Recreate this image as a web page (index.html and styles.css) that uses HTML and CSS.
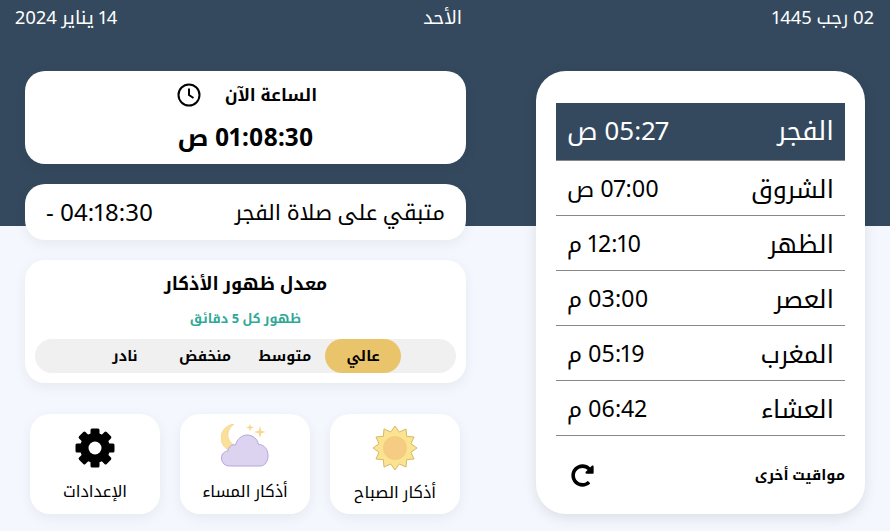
FILE: index.html
```html
<!DOCTYPE html>
<html lang="ar" dir="rtl">
  <head>
    <meta charset="UTF-8" />
    <meta name="viewport" content="width=device-width, initial-scale=1.0" />
    <title>مواقيت الصلاة</title>
    <link rel="stylesheet" href="styles.css">
  </head>
  <body>
    <main class="page">
      <!-- Prayer times column -->
      <section class="side">
        <div class="hijri">02 رجب 1445</div>
        <div class="prayers">
          <div class="prayer active"><span class="name">الفجر</span><span class="time">05:27 ص</span></div>
          <div class="prayer"><span class="name">الشروق</span><span class="time">07:00 ص</span></div>
          <div class="prayer"><span class="name">الظهر</span><span class="time">12:10 م</span></div>
          <div class="prayer"><span class="name">العصر</span><span class="time">03:00 م</span></div>
          <div class="prayer"><span class="name">المغرب</span><span class="time">05:19 م</span></div>
          <div class="prayer"><span class="name">العشاء</span><span class="time">06:42 م</span></div>
          <div class="more">
            <span>مواقيت أخرى</span>
            <svg class="refresh" viewBox="0 0 512 512"><path d="M256.455 8c66.269.119 126.437 26.233 170.859 68.685l35.715-35.715C478.149 25.851 504 36.559 504 57.941V192c0 13.255-10.745 24-24 24H345.941c-21.382 0-32.09-25.851-16.971-40.971l41.75-41.75c-30.864-28.899-70.801-44.907-113.23-45.273-92.398-.798-170.283 73.977-169.484 169.442C88.764 348.009 162.184 424 256 424c41.127 0 79.997-14.678 110.629-41.556 4.743-4.161 11.906-3.908 16.368.553l39.662 39.662c4.872 4.872 4.631 12.815-.482 17.433C378.202 479.813 319.926 504 256 504 119.034 504 8.001 392.967 8 256.002 7.999 119.193 119.646 7.755 256.455 8z"/></svg>
          </div>
        </div>
      </section>

      <!-- Clock and settings column -->
      <section class="content">
        <div class="dates">
          <span>الأحد</span>
          <span>14 يناير 2024</span>
        </div>

        <div class="card clock">
          <div class="clock-title">
            <span>الساعة الآن</span>
            <svg class="clock-icon" viewBox="0 0 24 24"><circle cx="12" cy="12" r="10.5"/><path d="M12 5.500V12l4.500 3"/></svg>
          </div>
          <div class="clock-time">01:08:30 ص</div>
        </div>

        <div class="card remaining">
          <span class="remaining-label">متبقي على صلاة الفجر</span>
          <span>04:18:30 -</span>
        </div>

        <div class="card rate">
          <h2>معدل ظهور الأذكار</h2>
          <p>ظهور كل 5 دقائق</p>
          <div class="options">
            <span class="option selected">عالي</span>
            <span class="option">متوسط</span>
            <span class="option">منخفض</span>
            <span class="option">نادر</span>
          </div>
        </div>

        <div class="tiles">
          <div class="tile">
            <svg class="tile-icon" viewBox="0 0 48 48">
              <polygon fill="#fbe48f" stroke="#d9b968" stroke-width="1" stroke-linejoin="round" points="46,24 39.94,28.27 43.05,35 35.67,35.67 35,43.05 28.27,39.94 24,46 19.73,39.94 13,43.05 12.33,35.67 4.95,35 8.06,28.27 2,24 8.06,19.73 4.95,13 12.33,12.33 13,4.95 19.73,8.06 24,2 28.27,8.06 35,4.95 35.67,12.33 43.05,13 39.94,19.73"/>
              <circle cx="24" cy="24" r="12" fill="#f6cc85"/>
            </svg>
            <span>أذكار الصباح</span>
          </div>
          <div class="tile">
            <svg class="tile-icon night" viewBox="0 0 48 44">
              <path fill="#fbe09a" stroke="#f0cf86" stroke-width=".6" d="M13 0C5 1 0 7 0 14c0 5 3 10 8 12l8-3C10 20 6 15 7 9c1-4 3-7 6-9z"/>
              <path fill="#dcd3f0" stroke="#b6a6d4" stroke-width="1" d="M9 42c-5 0-8.500-3-8.500-8 0-4 3-7 6.500-7 0-4 4-7 7.500-6 1.500-6 6.500-10 11.500-10 6 0 10.500 4 11.500 9.500 6 0 9.500 5 9.500 11 0 6-3 10.500-8 10.500z"/>
              <path fill="#fbd68c" d="M29 0l1 2.500 3 1-3 1-1 3-1-3-3-1 3-1z"/>
              <path fill="#fbd68c" d="M39 2l1.300 4.700L45 8l-4.700 1.300L39 14l-1.300-4.700L33 8l4.700-1.300z"/>
            </svg>
            <span>أذكار المساء</span>
          </div>
          <div class="tile settings">
            <svg class="tile-icon" viewBox="0 0 48 48">
              <g fill="#000">
                <rect x="19.500" y="4.500" width="9" height="39" rx="1.500"/>
                <rect x="19.500" y="4.500" width="9" height="39" rx="1.500" transform="rotate(45 24 24)"/>
                <rect x="19.500" y="4.500" width="9" height="39" rx="1.500" transform="rotate(90 24 24)"/>
                <rect x="19.500" y="4.500" width="9" height="39" rx="1.500" transform="rotate(135 24 24)"/>
                <circle cx="24" cy="24" r="15"/>
              </g>
              <circle cx="24" cy="24" r="6.500" fill="#fff"/>
            </svg>
            <span>الإعدادات</span>
          </div>
        </div>
      </section>
    </main>
  </body>
</html>
```

FILE: styles.css
```css
* {
  box-sizing: border-box;
}
html,
body {
  margin: 0;
  height: 100%;
}
body {
  font-family: "Noto Sans", "Noto Kufi Arabic", sans-serif;
  font-variant-numeric: proportional-nums;
  color: #000;
  background: linear-gradient(#34495e 226px, #f4f7fe 226px);
  overflow: hidden;
}
.page {
  display: flex;
  gap: 70px;
  height: 531px;
  padding: 0 16px 0 15px;
}
.side {
  width: 338px;
}
.hijri {
  height: 71px;
  padding-top: 4px;
  font-size: 18.4px;
  line-height: 26px;
  color: #fff;
}
.prayers {
  width: 329px;
  height: 443px;
  padding: 32px 20px 0;
  margin-right: 9px;
  background: #fff;
  border-radius: 30px;
  box-shadow: 0 4px 14px rgba(0, 0, 0, 0.1);
}
.prayer {
  display: flex;
  justify-content: space-between;
  align-items: center;
  height: 55px;
  padding: 0 11px;
  line-height: 30px;
  border-bottom: 1px solid #888;
}
.name {
  font-size: 25px;
}
.time {
  font-size: 23.2px;
}
.prayer.active {
  height: 58px;
  padding-bottom: 3px;
  background: #34495e;
  color: #fff;
}
.active .name {
  font-size: 26.5px;
}
.active .time {
  font-size: 26px;
}
.more {
  display: flex;
  justify-content: space-between;
  align-items: center;
  height: 78px;
  padding-left: 15px;
  font-size: 14.5px;
  font-weight: bold;
}
.refresh {
  width: 23px;
  height: 23px;
}
.content {
  width: 451px;
}
.dates {
  display: flex;
  justify-content: space-between;
  height: 71px;
  margin-right: 4px;
  padding-top: 4px;
  font-size: 18.4px;
  line-height: 26px;
  color: #fff;
}
.card {
  width: 441px;
  margin-bottom: 20px;
  background: #fff;
  border-radius: 20px;
  box-shadow: 0 4px 14px rgba(0, 0, 0, 0.06);
}
.clock {
  height: 93px;
  padding-top: 12px;
  text-align: center;
}
.clock-title {
  display: flex;
  justify-content: center;
  align-items: center;
  gap: 24px;
  height: 24px;
  padding-left: 3px;
  font-size: 17px;
  font-weight: bold;
}
.clock-icon {
  width: 24px;
  height: 24px;
  fill: none;
  stroke: #000;
  stroke-width: 2;
}
.clock-time {
  margin-top: 15px;
  font-size: 24.3px;
  line-height: 30px;
  font-weight: bold;
}
.remaining {
  display: flex;
  justify-content: space-between;
  align-items: center;
  height: 56px;
  padding: 0 21px;
  font-size: 24px;
  line-height: 30px;
}
.remaining-label {
  font-size: 21.7px;
}
.rate {
  height: 123px;
  padding: 8px 10px 0;
  text-align: center;
}
.rate h2 {
  margin: 0;
  font-size: 17.8px;
  line-height: 30px;
}
.rate p {
  margin: 10px 0 11px;
  font-size: 12.8px;
  line-height: 20px;
  font-weight: bold;
  color: #2fa896;
}
.options {
  display: flex;
  height: 34px;
  padding-right: 55px;
  background: #f0f0f0;
  border-radius: 17px;
}
.option {
  width: 80px;
  font-size: 14.4px;
  font-weight: bold;
  line-height: 34px;
}
.option.selected {
  width: 76px;
  background: #e9c46a;
  border-radius: 17px;
}
.tiles {
  display: flex;
  gap: 20px;
  margin: 31px 6px 0 0;
  width: 430px;
}
.tile {
  display: flex;
  flex-direction: column;
  align-items: center;
  width: 130px;
  height: 100px;
  padding-top: 10px;
  font-size: 16.4px;
  line-height: 24px;
  background: #fff;
  border-radius: 20px;
  box-shadow: 0 4px 14px rgba(0, 0, 0, 0.06);
}
.tile-icon {
  width: 48px;
  height: 48px;
  margin-bottom: 8px;
}
.tile-icon.night {
  height: 44px;
  margin-bottom: 11px;
}
.settings .tile-icon {
  margin-bottom: 7px;
}
```
